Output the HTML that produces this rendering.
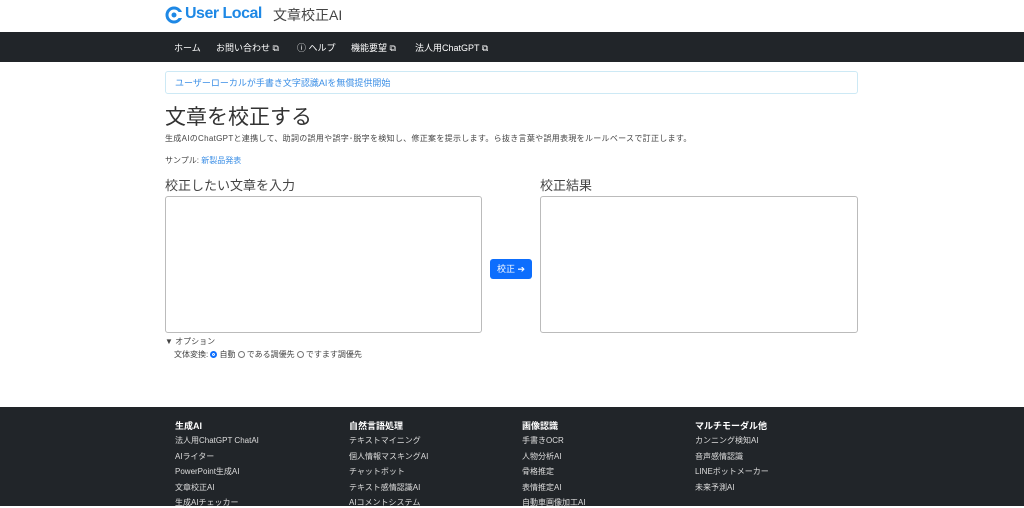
<!DOCTYPE html>
<html><head><meta charset="utf-8"><style>
*{box-sizing:border-box;margin:0;padding:0}
body{width:1024px;height:506px;overflow:hidden;background:#fff;font-family:"Liberation Sans","Noto Sans CJK JP",sans-serif;color:#333;position:relative}
.a{position:absolute;white-space:nowrap}
.nav{position:absolute;top:32px;left:0;width:1024px;height:30px;background:#212529}
.nav span{position:absolute;top:9px;color:#fff;font-size:9px}
.ta{position:absolute;border:1px solid #bbb;border-radius:3px;background:#fff}
.foot{position:absolute;top:407px;left:0;width:1024px;height:99px;background:#212529;color:#ddd;font-size:8px}
.foot div{position:absolute;white-space:nowrap}
.h{font-weight:bold;color:#fff;font-size:9px}
.rad{display:inline-block;width:7px;height:7px;border:1px solid #777;border-radius:50%;vertical-align:-1px;margin-right:2px}
</style></head><body>
<svg class="a" style="left:165px;top:6px" width="18" height="18" viewBox="0 0 18 18"><circle cx="9" cy="9" r="7" fill="none" stroke="#1e88e5" stroke-width="3"/><circle cx="9" cy="9" r="2.5" fill="#1e88e5"/><rect x="12" y="6" width="6" height="6" fill="#fff"/></svg>
<div class="a" style="left:185px;top:5px;font-size:16px;font-weight:bold;color:#1e88e5;letter-spacing:-0.5px">User Local</div>
<div class="a" style="left:273px;top:5px;font-size:14px;color:#444">文章校正AI</div>
<div class="nav">
<span style="left:174px">ホーム</span>
<span style="left:216px">お問い合わせ ⧉</span>
<span style="left:297px">ⓘ ヘルプ</span>
<span style="left:351px">機能要望 ⧉</span>
<span style="left:415px">法人用ChatGPT ⧉</span>
</div>
<div class="a" style="left:165px;top:71px;width:693px;height:23px;border:1px solid #cde9f5;border-radius:3px;"></div>
<div class="a" style="left:175px;top:76px;font-size:9px;color:#3a8ee6">ユーザーローカルが手書き文字認識AIを無償提供開始</div>
<div class="a" style="left:165px;top:101px;font-size:21px;color:#333">文章を校正する</div>
<div class="a" style="left:165px;top:133px;font-size:8px;color:#444;letter-spacing:0.3px">生成AIのChatGPTと連携して、助詞の誤用や誤字･脱字を検知し、修正案を提示します。ら抜き言葉や誤用表現をルールベースで訂正します。</div>
<div class="a" style="left:165px;top:155px;font-size:8px;color:#444">サンプル: <span style="color:#3a8ee6">新製品発表</span></div>
<div class="a" style="left:165px;top:175px;font-size:13px;color:#444">校正したい文章を入力</div>
<div class="a" style="left:540px;top:175px;font-size:13px;color:#444">校正結果</div>
<div class="ta" style="left:165px;top:196px;width:317px;height:137px"></div>
<div class="ta" style="left:540px;top:196px;width:318px;height:137px"></div>
<div class="a" style="left:490px;top:259px;width:42px;height:20px;background:#0d6efd;border-radius:3px;color:#fff;font-size:9px;text-align:center;line-height:20px">校正 ➔</div>
<div class="a" style="left:165px;top:336px;font-size:8px;color:#444">▼ オプション</div>
<div class="a" style="left:174px;top:349px;font-size:8px;color:#444">文体変換: <span class="rad" style="border:2px solid #0d6efd;background:#0d6efd;box-shadow:inset 0 0 0 1px #fff"></span>自動 <span class="rad"></span>である調優先 <span class="rad"></span>ですます調優先</div>
<div class="foot">
<div class="h" style="left:175px;top:12px">生成AI</div>
<div style="left:175px;top:28px">法人用ChatGPT ChatAI</div>
<div style="left:175px;top:44px">AIライター</div>
<div style="left:175px;top:59px">PowerPoint生成AI</div>
<div style="left:175px;top:75px">文章校正AI</div>
<div style="left:175px;top:90px">生成AIチェッカー</div>
<div class="h" style="left:349px;top:12px">自然言語処理</div>
<div style="left:349px;top:28px">テキストマイニング</div>
<div style="left:349px;top:44px">個人情報マスキングAI</div>
<div style="left:349px;top:59px">チャットボット</div>
<div style="left:349px;top:75px">テキスト感情認識AI</div>
<div style="left:349px;top:90px">AIコメントシステム</div>
<div class="h" style="left:522px;top:12px">画像認識</div>
<div style="left:522px;top:28px">手書きOCR</div>
<div style="left:522px;top:44px">人物分析AI</div>
<div style="left:522px;top:59px">骨格推定</div>
<div style="left:522px;top:75px">表情推定AI</div>
<div style="left:522px;top:90px">自動車画像加工AI</div>
<div class="h" style="left:695px;top:12px">マルチモーダル他</div>
<div style="left:695px;top:28px">カンニング検知AI</div>
<div style="left:695px;top:44px">音声感情認識</div>
<div style="left:695px;top:59px">LINEボットメーカー</div>
<div style="left:695px;top:75px">未来予測AI</div>
</div>
</body></html>
